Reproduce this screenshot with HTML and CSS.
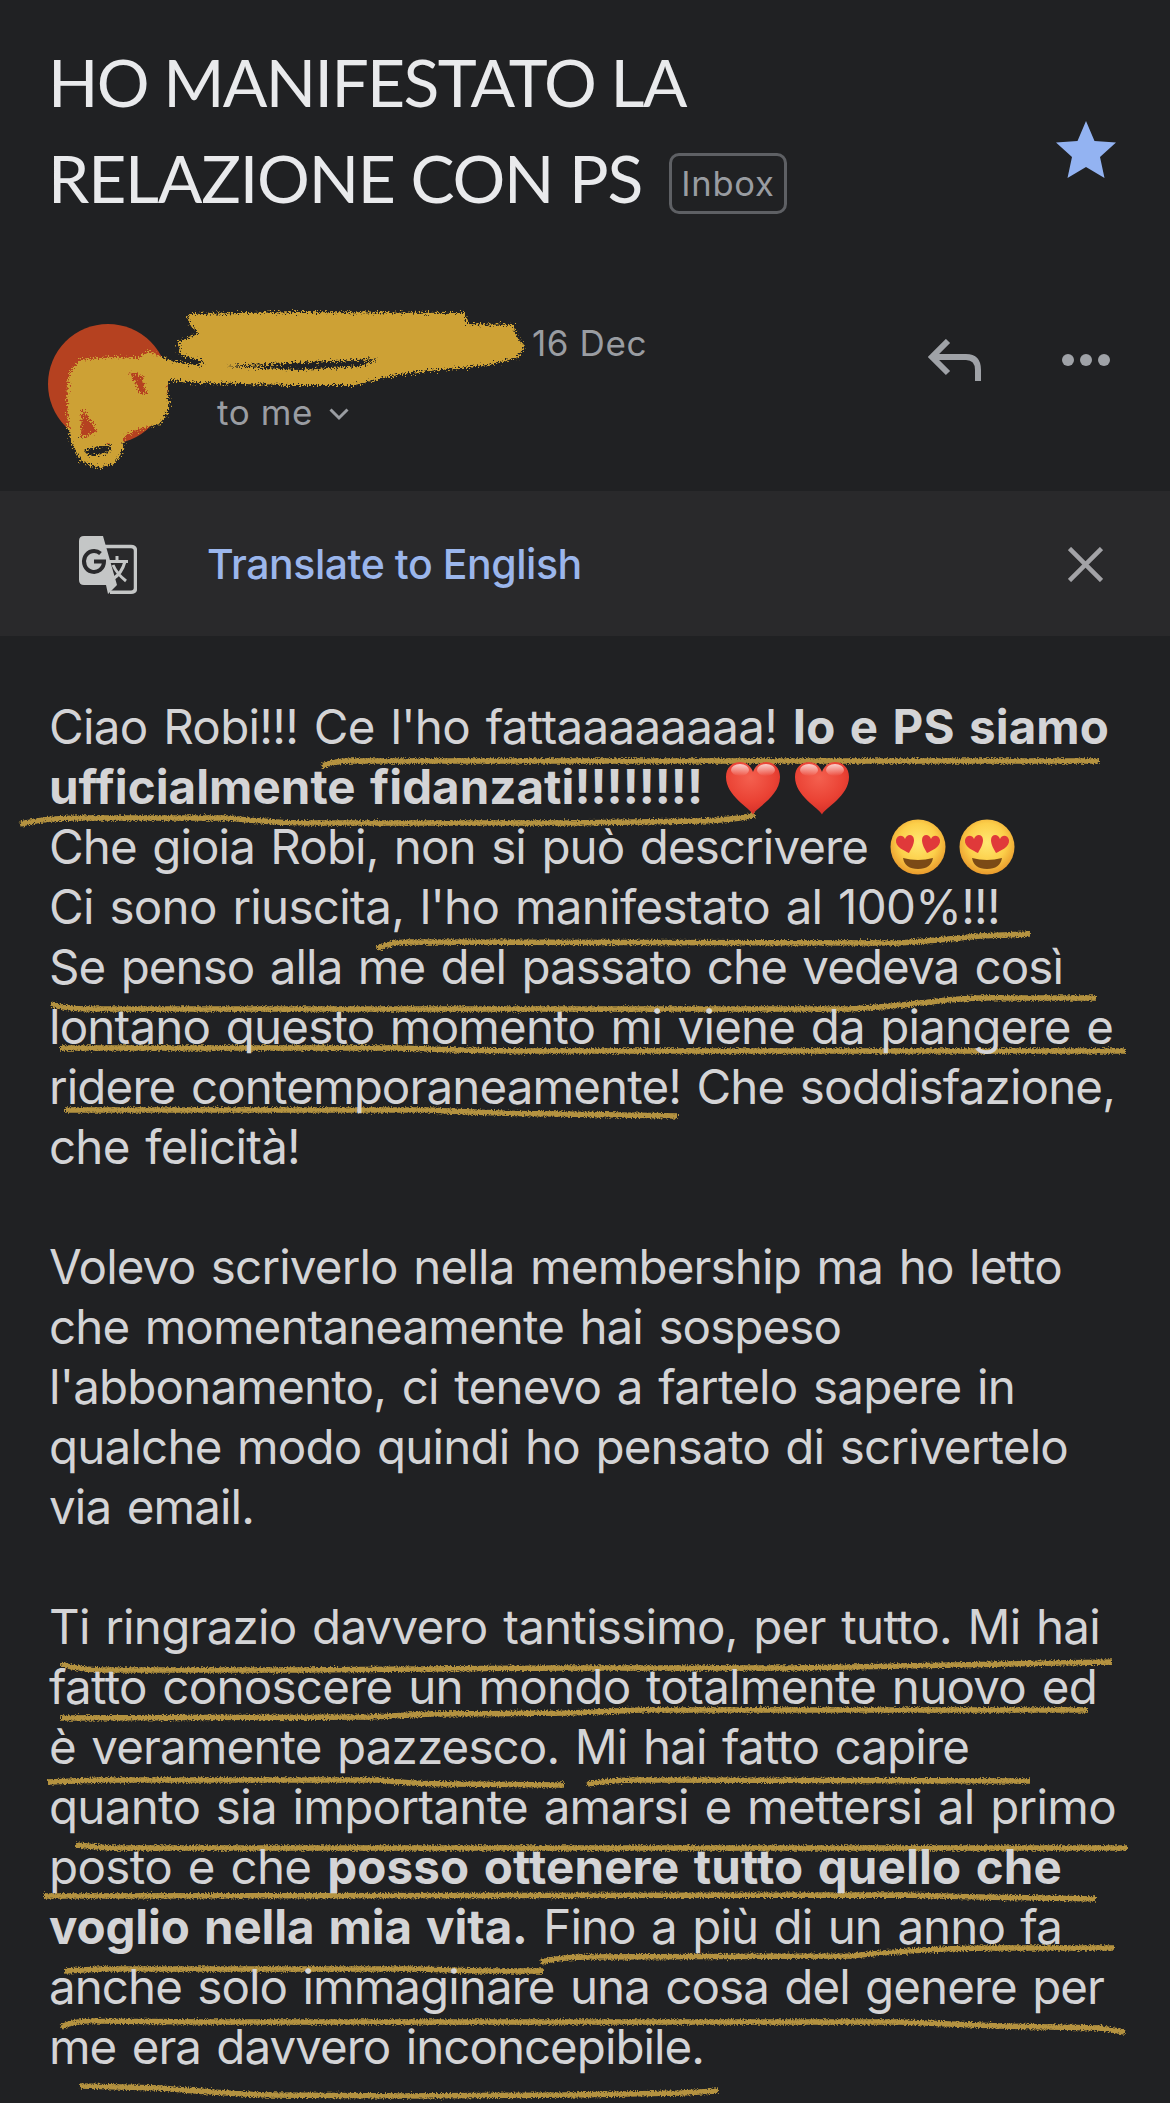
FILE: index.html
```html
<!DOCTYPE html>
<html lang="it">
<head>
	<title>HO MANIFESTATO LA RELAZIONE CON PS</title>
	<meta charset="UTF-8">
	<link rel="stylesheet" href="styles.css">
</head>
<body>
	<svg class="defs" width="0" height="0">
		<defs>
			<filter id="chalk" x="0" y="0" width="1170" height="2103" filterUnits="userSpaceOnUse">
				<feTurbulence type="fractalNoise" baseFrequency="0.7" numOctaves="2" seed="4" result="noise"/>
				<feDisplacementMap in="SourceGraphic" in2="noise" scale="5" xChannelSelector="R" yChannelSelector="G"/>
			</filter>
			<filter id="crayon" x="0" y="0" width="1170" height="500" filterUnits="userSpaceOnUse">
				<feTurbulence type="fractalNoise" baseFrequency="0.6" numOctaves="3" seed="9" result="noise"/>
				<feDisplacementMap in="SourceGraphic" in2="noise" scale="11" xChannelSelector="R" yChannelSelector="G"/>
			</filter>
			<radialGradient id="heart-red" cx="45%" cy="30%" r="75%">
				<stop offset="0" stop-color="#f4604f"/>
				<stop offset="0.6" stop-color="#ea4234"/>
				<stop offset="1" stop-color="#d02c26"/>
			</radialGradient>
			<linearGradient id="heart-shine" x1="0" y1="0" x2="0" y2="1">
				<stop offset="0" stop-color="#fff" stop-opacity="0.75"/>
				<stop offset="1" stop-color="#fff" stop-opacity="0"/>
			</linearGradient>
			<radialGradient id="face" cx="50%" cy="42%" r="58%">
				<stop offset="0" stop-color="#ffe873"/>
				<stop offset="0.6" stop-color="#fccf4a"/>
				<stop offset="1" stop-color="#e99a2c"/>
			</radialGradient>
			<symbol id="heart" viewBox="0 0 56 54">
				<path fill="url(#heart-red)" d="M28 53.500C25 47 1 35 1 16C1 7 7 1 15 1C21 1 26 5 28 11C30 5 35 1 41 1C49 1 55 7 55 16C55 35 31 47 28 53.500Z"/>
				<ellipse fill="url(#heart-shine)" cx="15" cy="9" rx="9" ry="6"/>
				<ellipse fill="url(#heart-shine)" cx="41" cy="9" rx="9" ry="6"/>
			</symbol>
			<symbol id="love" viewBox="0 0 56 56">
				<circle fill="url(#face)" cx="28" cy="28" r="27.500"/>
				<path fill="#e0393a" d="M19 34C15 32 5 28 6 21C7 16 13 15 15 20C17 14 24 15 24 21C24 26 21 30 19 34Z"/>
				<path fill="#e0393a" d="M37 34C35 30 32 26 32 21C32 15 39 14 41 20C43 15 49 16 50 21C51 28 41 32 37 34Z"/>
				<path fill="#7b4a16" d="M13 39Q28 43 43 39Q41 50 28 50Q15 50 13 39Z"/>
			</symbol>
		</defs>
	</svg>

	<div class="mail">
		<div class="subject">
			<h1 class="title">
				<span class="t1">HO MANIFESTATO LA</span><br>
				<span class="t2">RELAZIONE CON PS</span>
				<span class="label">Inbox</span>
			</h1>
			<svg class="star" width="60" height="58" viewBox="0 0 60 58"><path fill="#93b3f2" d="M30 0L38.500 20L60 21.500L44 36L48.500 57L30 46L11.500 57L16 36L0 21.500L21.500 20Z"/></svg>
		</div>

		<div class="sender">
			<div class="avatar"></div>
			<div class="info">
				<div class="date">16 Dec</div>
				<div class="to">to me
					<svg width="20" height="13" viewBox="0 0 20 13"><path fill="none" stroke="#9a9da2" stroke-width="3" d="M1.500 1.500L10 10L18.500 1.500"/></svg>
				</div>
			</div>
			<svg class="reply" width="54" height="44" viewBox="0 0 54 44"><path fill="none" stroke="#9fa2a7" stroke-width="6" d="M20 2L4 18L20 34M4 18H38Q50 18 50 31V42"/></svg>
			<svg class="more" width="50" height="12" viewBox="0 0 50 12" fill="#9fa2a7"><circle cx="7" cy="6" r="6"/><circle cx="25" cy="6" r="6"/><circle cx="43" cy="6" r="6"/></svg>
		</div>

		<div class="translate">
			<svg class="gt" width="58" height="58" viewBox="0 0 58 58">
				<path fill="none" stroke="#c4c6c6" stroke-width="3.500" d="M26 10.500H52Q56.500 10.500 56.500 15V52Q56.500 56.200 52 56.200H31"/>
				<path fill="#c4c6c6" d="M5 0H24L38 49L29 58L27 49H5Q0 49 0 44V5Q0 0 5 0Z"/>
				<path fill="none" stroke="#29292b" stroke-width="4" d="M21.500 17.500A10 10.500 0 1 0 25 25.500H15"/>
				<path fill="none" stroke="#c4c6c6" stroke-width="3" d="M31 25.500H49M38 20V25M46 25.500Q43 37 34 43M34 29Q38 38 47 45"/>
			</svg>
			<a class="link">Translate to English</a>
			<svg class="close" width="35" height="35" viewBox="0 0 35 35"><path stroke="#a3a3a7" stroke-width="4.500" d="M1.500 1.500L33.500 33.500M33.500 1.500L1.500 33.500"/></svg>
		</div>

		<div class="text">
			<p>
				<span class="line" data-width="1060">Ciao Robi!!! Ce l'ho fattaaaaaaaa! <b>Io e PS siamo</b></span><br>
				<span class="line" data-width="654"><b>ufficialmente fidanzati!!!!!!!!</b></span> <svg class="emoji first" width="56" height="54"><use href="#heart"/></svg><svg class="emoji" width="56" height="54"><use href="#heart"/></svg><br>
				<span class="line" data-width="819">Che gioia Robi, non si può descrivere</span> <svg class="emoji first" width="56" height="56"><use href="#love"/></svg><svg class="emoji" width="56" height="56"><use href="#love"/></svg><br>
				<span class="line" data-width="951">Ci sono riuscita, l'ho manifestato al 100%!!!</span><br>
				<span class="line" data-width="1014">Se penso alla me del passato che vedeva così</span><br>
				<span class="line" data-width="1064">lontano questo momento mi viene da piangere e</span><br>
				<span class="line" data-width="1066">ridere contemporaneamente! Che soddisfazione,</span><br>
				<span class="line" data-width="251">che felicità!</span>
			</p>
			<p>
				<span class="line" data-width="1013">Volevo scriverlo nella membership ma ho letto</span><br>
				<span class="line" data-width="792">che momentaneamente hai sospeso</span><br>
				<span class="line" data-width="966">l'abbonamento, ci tenevo a fartelo sapere in</span><br>
				<span class="line" data-width="1019">qualche modo quindi ho pensato di scrivertelo</span><br>
				<span class="line" data-width="205">via email.</span>
			</p>
			<p>
				<span class="line" data-width="1051">Ti ringrazio davvero tantissimo, per tutto. Mi hai</span><br>
				<span class="line" data-width="1048">fatto conoscere un mondo totalmente nuovo ed</span><br>
				<span class="line" data-width="920">è veramente pazzesco. Mi hai fatto capire</span><br>
				<span class="line" data-width="1067">quanto sia importante amarsi e mettersi al primo</span><br>
				<span class="line" data-width="1013">posto e che <b>posso ottenere tutto quello che</b></span><br>
				<span class="line" data-width="1013"><b>voglio nella mia vita.</b> Fino a più di un anno fa</span><br>
				<span class="line" data-width="1055">anche solo immaginare una cosa del genere per</span><br>
				<span class="line" data-width="655">me era davvero inconcepibile.</span>
			</p>
		</div>

		<svg class="marks" width="1170" height="2103" viewBox="0 0 1170 2103">
			<g class="lines" filter="url(#chalk)">
				<path d="M322 766Q334 761 350 761L1099 761"/>
				<path d="M20 824Q50 817 90 818L230 818Q270 823 310 823L570 823L700 821Q735 820 755 815"/>
				<path d="M377 949Q390 942 410 942L900 943Q950 939 980 936L1030 934"/>
				<path d="M51 1004Q65 1009 90 1009L850 1009Q890 1007 930 1002T1010 998L1096 998"/>
				<path d="M60 1048L400 1048Q470 1051 540 1051L1126 1051"/>
				<path d="M65 1110L430 1110Q500 1114 560 1114L678 1116"/>
				<path d="M61 1664Q75 1669 100 1670L300 1670L560 1668L800 1668L900 1666L1112 1662"/>
				<path d="M61 1718L370 1717L430 1714L570 1713L640 1710L1087 1710"/>
				<path d="M48 1782L100 1780L380 1780Q410 1784 450 1784L564 1785"/>
				<path d="M587 1784Q610 1780 640 1780L1030 1781"/>
				<path d="M76 1845L110 1848L1127 1848"/>
				<path d="M44 1896L900 1895L980 1897L1096 1899"/>
				<path d="M65 1971L100 1969L420 1969L480 1971L543 1971"/>
				<path d="M541 1962Q560 1957 590 1957L850 1956Q930 1948 990 1948L1114 1948"/>
				<path d="M61 2027Q75 2020 100 2021L200 2022L900 2022L1000 2026L1100 2028L1125 2032"/>
				<path d="M80 2086L160 2088Q230 2094 270 2095L400 2096L570 2095L680 2093L718 2091"/>
			</g>
		</svg>
		<svg class="marks over" width="1170" height="500" viewBox="0 0 1170 500">
			<g filter="url(#crayon)">
				<path class="blob" fill-rule="evenodd" d="M188 314L300 312L465 313L467 324L513 325L517 337L525 346L517 358L488 365L450 369L400 374L355 385L290 385L200 383L170 380L167 391L170 408L160 424L140 429L124 436L123 450L115 463L100 468L82 462L72 445L68 425L67 398L69 373L80 360L110 357L138 358L148 351L172 361L200 366L203 361L180 355L178 342L199 333L190 326ZM129 372L142 376L147 396L140 393ZM82 408L97 431L81 438ZM83 450L111 444L109 453L89 456ZM225 366L310 362L378 359L360 366L300 370Z"/>
			</g>
		</svg>
	</div>

	<script type="text/javascript">
		// spread the letters so that every line gets its own width
		document.querySelectorAll(".line").forEach( function(line) {
			var diff = line.dataset.width - line.getBoundingClientRect().width;
			line.style.setProperty("--ls", (diff / line.textContent.length).toFixed(3) + "px");
		} );
	</script>
</body>
</html>
```

FILE: styles.css
```css
*{
	box-sizing: border-box;
}

body{
	margin: 0;
	background: #202123;
	font-family: Inter, "Liberation Sans", sans-serif;
	color: #d4d4d6;
}

.defs{
	position: absolute;
}

.mail{
	position: relative;
	z-index: 0;
	width: 1170px;
	height: 2103px;
	overflow: hidden;
}

.subject{
	display: flex;
	height: 324px;
	padding: 34px 54px 0 48px;
	justify-content: space-between;
}

.title{
	margin: 0;
	font-family: Lato, sans-serif;
	font-size: 66px;
	line-height: 96px;
	font-weight: normal;
	color: #e9eaec;
}

.t1{
	letter-spacing: -1.65px;
}

.t2{
	letter-spacing: -1.2px;
}

.label{
	display: inline-flex;
	align-items: center;
	justify-content: center;
	width: 118px;
	height: 61px;
	margin-left: 10px;
	border: 3px solid #5e6064;
	border-radius: 10px;
	font-family: Inter, sans-serif;
	font-size: 34.5px;
	line-height: 55px;
	letter-spacing: 0.8px;
	color: #999ca1;
	vertical-align: 7px;
}

.star{
	margin-top: 87px;
}

.sender{
	display: flex;
	height: 167px;
	padding: 0 58px 0 48px;
}

.avatar{
	width: 120px;
	height: 120px;
	border-radius: 50%;
	background: #b54120;
}

.info{
	width: 760px;
	padding-left: 49px;
	font-size: 35px;
	line-height: 69px;
	letter-spacing: 0.6px;
	color: #9a9da2;
}

.date{
	margin: -15px 0 0 315px;
}

.to svg{
	margin-left: 6px;
	vertical-align: 4px;
}

.reply{
	margin-top: 15px;
}

.more{
	margin: 30px 1px 0 auto;
}

.translate{
	display: flex;
	align-items: center;
	height: 145px;
	padding: 0 67px 0 79px;
	background: #29292b;
}

.gt{
	margin-top: 2px;
}

.link{
	margin-left: 70px;
	font-size: 41px;
	font-weight: 500;
	letter-spacing: -0.45px;
	color: #9bb6ec;
}

.close{
	margin: 2px 0 0 auto;
}

.text{
	padding: 61px 0 0 49px;
	font-size: 47.5px;
	line-height: 60px;
	word-spacing: 3px;
	white-space: nowrap;
}

.text p{
	margin: 0 0 60px;
}

.line{
	--ls: 0px;
	letter-spacing: var(--ls);
}

.line b{
	letter-spacing: calc(var(--ls) + 0.8px);
}

.emoji{
	margin: -10px 13px -10px 0;
	vertical-align: -1px;
}

.first{
	margin-left: 6px;
}

.marks{
	position: absolute;
	top: 0;
	left: 0;
	z-index: -1;
}

.over{
	z-index: 1;
}

.lines{
	fill: none;
	stroke: #b4923f;
	stroke-width: 5.5;
}

.blob{
	fill: #cda136;
}
```
